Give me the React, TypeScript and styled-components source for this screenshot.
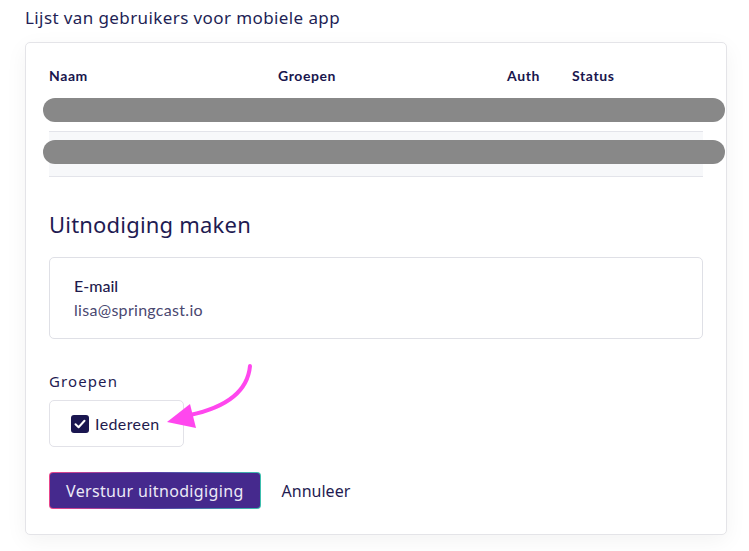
import React from "react";
import styled, { createGlobalStyle } from "styled-components";

const GlobalStyle = createGlobalStyle`
  html, body { margin: 0; padding: 0; background: #ffffff; }
  body { font-family: Lato, "Noto Sans", sans-serif; color: #1d1a4e; }
  * { box-sizing: border-box; }
`;

const Page = styled.div`
  padding: 8px 22px 16px 25px;
  width: 749px;
`;

const PageTitle = styled.h2`
  margin: 0 0 14px 0;
  font-family: "Noto Sans", sans-serif;
  font-weight: 400;
  font-size: 17px;
  line-height: 20px;
  letter-spacing: 0.4px;
  color: #231f55;
`;

const Card = styled.section`
  background: #fff;
  border: 1px solid #e4e4e8;
  border-radius: 5px;
  box-shadow: 0 6px 22px rgba(0, 0, 0, 0.05);
  padding: 23px 23px 25px 23px;
`;

const Table = styled.div`
  display: flex;
  flex-direction: column;
`;

const HeaderRow = styled.div`
  display: grid;
  grid-template-columns: 229px 229px 65px 1fr;
  height: 20px;
  font-family: Lato, sans-serif;
  font-weight: 700;
  font-size: 14px;
  line-height: 20px;
  letter-spacing: 0.6px;
  color: #19164d;
`;

const Row = styled.div<{ $alt?: boolean; $h: number }>`
  position: relative;
  height: ${(p) => p.$h}px;
  border-bottom: 1px solid #e3e4ea;
  background: ${(p) => (p.$alt ? "#f7f8fa" : "#ffffff")};
`;

const Redaction = styled.div<{ $top: number }>`
  position: absolute;
  left: -6px;
  right: -22px;
  top: ${(p) => p.$top}px;
  height: 24px;
  border-radius: 12px;
  background: #888888;
`;

const SectionTitle = styled.h3`
  margin: 33px 0 19px 0;
  font-family: "Noto Sans", sans-serif;
  font-weight: 400;
  font-size: 22px;
  line-height: 28px;
  letter-spacing: 0.2px;
  color: #1f1b52;
`;

const FieldBox = styled.div`
  border: 1px solid #dfe0e6;
  border-radius: 5px;
  padding: 17px 24px 17px 24px;
  display: flex;
  flex-direction: column;
  gap: 2px;
`;

const FieldLabel = styled.div`
  font-size: 16px;
  line-height: 22px;
  font-weight: 500;
  color: #1f1b4d;
`;

const FieldValue = styled.div`
  font-size: 16px;
  line-height: 22px;
  font-weight: 400;
  letter-spacing: 0.3px;
  color: #4a4870;
`;

const GroupLabel = styled.div`
  margin: 31px 0 8px 0;
  font-family: "Noto Sans", sans-serif;
  font-size: 15px;
  line-height: 22px;
  letter-spacing: 1.1px;
  color: #1f1b52;
`;

const GroupWrap = styled.div`
  position: relative;
`;

const CheckOption = styled.label`
  display: inline-flex;
  align-items: center;
  gap: 6px;
  border: 1px solid #e2e2e8;
  border-radius: 5px;
  width: 135px;
  height: 47px;
  padding: 0 0 0 21px;
  font-size: 16px;
  letter-spacing: 0.4px;
  color: #1f1b4d;
`;

const CheckBox = styled.span`
  width: 18px;
  height: 18px;
  border-radius: 3px;
  background: #1a1650;
  display: inline-flex;
  align-items: center;
  justify-content: center;
`;

const Arrow = styled.svg`
  position: absolute;
  left: 111px;
  top: -40px;
  overflow: visible;
`;

const Actions = styled.div`
  display: flex;
  align-items: center;
  gap: 21px;
  margin-top: 25px;
`;

const PrimaryButton = styled.button`
  height: 37px;
  padding: 0 16px;
  border-radius: 4px;
  border: 1px solid transparent;
  background: linear-gradient(#45298d, #45298d) padding-box,
    linear-gradient(90deg, #e8458b, #5a3ca8 50%, #3cbfae) border-box;
  color: #ece9f7;
  font-family: "Noto Sans", sans-serif;
  font-size: 16px;
  letter-spacing: 0.35px;
  cursor: pointer;
`;

const LinkButton = styled.button`
  border: none;
  background: none;
  padding: 0;
  font-family: "Noto Sans", sans-serif;
  font-size: 16px;
  letter-spacing: 0;
  color: #1f1b52;
  cursor: pointer;
`;

export default function App() {
  return (
    <>
      <GlobalStyle />
      <Page>
        <PageTitle>Lijst van gebruikers voor mobiele app</PageTitle>
        <Card>
          <Table>
            <HeaderRow>
              <span>Naam</span>
              <span>Groepen</span>
              <span>Auth</span>
              <span>Status</span>
            </HeaderRow>
            <Row $h={46}>
              <Redaction $top={12} />
            </Row>
            <Row $alt $h={45}>
              <Redaction $top={8} />
            </Row>
          </Table>

          <SectionTitle>Uitnodiging maken</SectionTitle>

          <FieldBox>
            <FieldLabel>E-mail</FieldLabel>
            <FieldValue>lisa@springcast.io</FieldValue>
          </FieldBox>

          <GroupLabel>Groepen</GroupLabel>
          <GroupWrap>
            <CheckOption>
              <CheckBox>
                <svg width="12" height="10" viewBox="0 0 12 10">
                  <path
                    d="M1.5 5.2 L4.6 8.2 L10.5 1.8"
                    fill="none"
                    stroke="#ffffff"
                    strokeWidth="2"
                    strokeLinecap="round"
                    strokeLinejoin="round"
                  />
                </svg>
              </CheckBox>
              Iedereen
            </CheckOption>
            <Arrow width="100" height="75" viewBox="0 0 100 75">
              <path
                d="M90 6 C 88 28, 72 46, 30 55"
                fill="none"
                stroke="#ff47ee"
                strokeWidth="4"
                strokeLinecap="round"
              />
              <polygon points="7,62 30,44 36,68" fill="#ff47ee" />
            </Arrow>
          </GroupWrap>

          <Actions>
            <PrimaryButton>Verstuur uitnodigiging</PrimaryButton>
            <LinkButton>Annuleer</LinkButton>
          </Actions>
        </Card>
      </Page>
    </>
  );
}
